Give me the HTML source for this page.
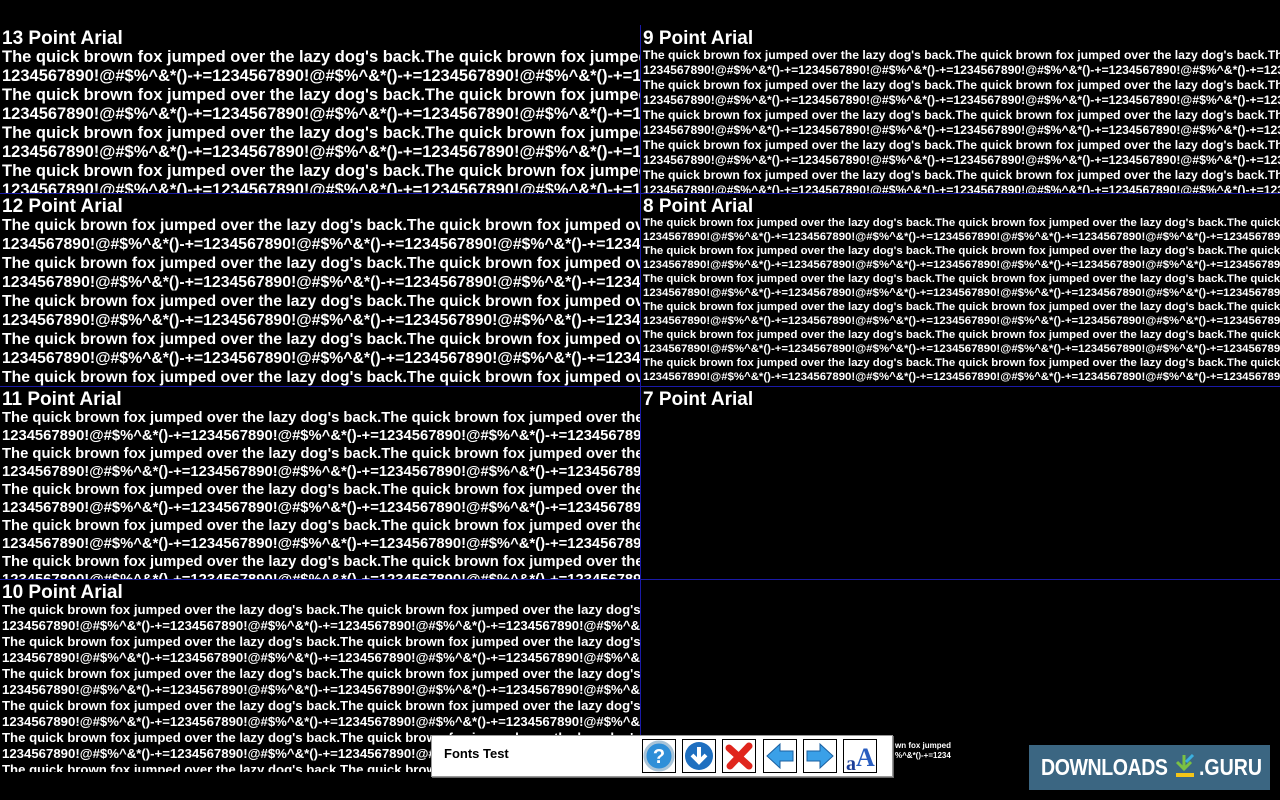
<!DOCTYPE html>
<html><head><meta charset="utf-8"><style>
*{margin:0;padding:0;box-sizing:border-box}
html,body{width:1280px;height:800px;background:#000;overflow:hidden;font-family:"Liberation Sans",Arial,sans-serif;color:#fff}
.p{position:absolute;overflow:hidden;font-weight:bold;white-space:nowrap;padding-left:2px}
.t{font-size:19px;line-height:19px}
.h{position:absolute;height:1px;background:#1a1aa8;left:0;width:1280px}
.v{position:absolute;width:1px;background:#1a1aa8}
.tb{position:absolute;left:431px;top:735px;width:462px;height:42px;background:#fff;border:1px solid #999;box-shadow:1px 1px 0 #666}
.btn{position:absolute;top:3px;width:34px;height:34px;border:1px solid #000;background:#fff}
.logo{position:absolute;left:1029px;top:745px;width:241px;height:45px;background:#3b6682}
</style></head><body>

<div class="p" style="left:0;top:25px;width:640px;height:168px;padding-top:4px">
<div class="t">13 Point Arial</div>
<div id="a13" style="font-size:16.5px;line-height:19px"></div></div>

<div class="p" style="left:0;top:193px;width:640px;height:193px;padding-top:4px">
<div class="t">12 Point Arial</div>
<div id="a12" style="font-size:15.8px;line-height:19px"></div></div>

<div class="p" style="left:0;top:386px;width:640px;height:193px;padding-top:4px">
<div class="t">11 Point Arial</div>
<div id="a11" style="font-size:14.8px;line-height:18px"></div></div>

<div class="p" style="left:0;top:579px;width:640px;height:193px;padding-top:4px">
<div class="t">10 Point Arial</div>
<div id="a10" style="font-size:13.2px;line-height:16px"></div></div>

<div class="p" style="left:641px;top:25px;width:639px;height:168px;padding-top:4px">
<div class="t">9 Point Arial</div>
<div id="a9" style="font-size:12.2px;line-height:15px"></div></div>

<div class="p" style="left:641px;top:193px;width:639px;height:193px;padding-top:4px">
<div class="t">8 Point Arial</div>
<div id="a8" style="font-size:11.4px;line-height:14px"></div></div>

<div class="p" style="left:641px;top:386px;width:639px;height:193px;padding-top:4px">
<div class="t">7 Point Arial</div></div>

<div class="h" style="top:193px"></div>
<div class="h" style="top:386px"></div>
<div class="h" style="top:579px"></div>
<div class="v" style="left:640px;top:25px;height:747px"></div>

<div class="p" style="left:893px;top:741px;width:58px;height:22px;font-size:8px;line-height:10px">wn fox jumped c<br>%^&amp;*()-+=1234</div>

<div class="tb">
<div style="position:absolute;left:12px;top:10px;font-size:13px;font-weight:bold;color:#000">Fonts Test</div>
<div class="btn" style="left:210px"><svg width="32" height="32"><circle cx="16" cy="16" r="14" fill="#2f8fd8" stroke="#a9c4d8" stroke-width="3"/><text x="16" y="23" font-size="20" font-weight="bold" fill="#fff" text-anchor="middle" font-family="Liberation Sans">?</text></svg></div>
<div class="btn" style="left:250px"><svg width="32" height="32"><circle cx="16" cy="16" r="14" fill="#1e6fc0"/><path d="M16 7v14M9 15l7 7 7-7" stroke="#fff" stroke-width="4" fill="none"/></svg></div>
<div class="btn" style="left:290px"><svg width="32" height="32"><path d="M6 8l20 18M26 6L7 26" stroke="#e0251c" stroke-width="7" stroke-linecap="round"/></svg></div>
<div class="btn" style="left:331px"><svg width="32" height="32"><path d="M3 16l13-12v7h13v10H16v7z" fill="#3aa0e8" stroke="#1a5fa0"/></svg></div>
<div class="btn" style="left:371px"><svg width="32" height="32"><path d="M29 16L16 4v7H3v10h13v7z" fill="#3aa0e8" stroke="#1a5fa0"/></svg></div>
<div class="btn" style="left:411px"><svg width="32" height="32"><text x="2" y="30" font-size="20" font-weight="bold" fill="#1c3e98" font-family="Liberation Serif">a</text><text x="12" y="26" font-size="26" font-weight="bold" fill="#2a5ec0" font-family="Liberation Serif">A</text></svg></div>
</div>

<div class="logo">
<div style="position:absolute;left:12px;top:9px;font-size:23px;font-weight:bold;letter-spacing:-0.5px;transform:scaleX(0.85);transform-origin:left">DOWNLOADS</div>
<svg style="position:absolute;left:145px;top:8px" width="24" height="28"><path d="M10 2v12M3 9l7 7 7-7" stroke="#7ac143" stroke-width="3" fill="none"/><path d="M12 9l7-7" stroke="#3ab0e0" stroke-width="3"/><rect x="2" y="20" width="18" height="4" fill="#f5c518"/></svg>
<div style="position:absolute;left:170px;top:9px;font-size:23px;font-weight:bold;transform:scaleX(0.85);transform-origin:left">.GURU</div>
</div>

<script>
var a="The quick brown fox jumped over the lazy dog's back.",b="1234567890!@#$%^&*()-+=";
var s1=a.repeat(4),s2=b.repeat(6);
function f(id,n){var h="";for(var i=0;i<n;i++){h+="<div>"+s1+"</div><div>"+s2+"</div>";}document.getElementById(id).innerHTML=h;}
["a13","a12","a11","a10","a9","a8"].forEach(function(id){f(id,7);});
</script>
</body></html>
